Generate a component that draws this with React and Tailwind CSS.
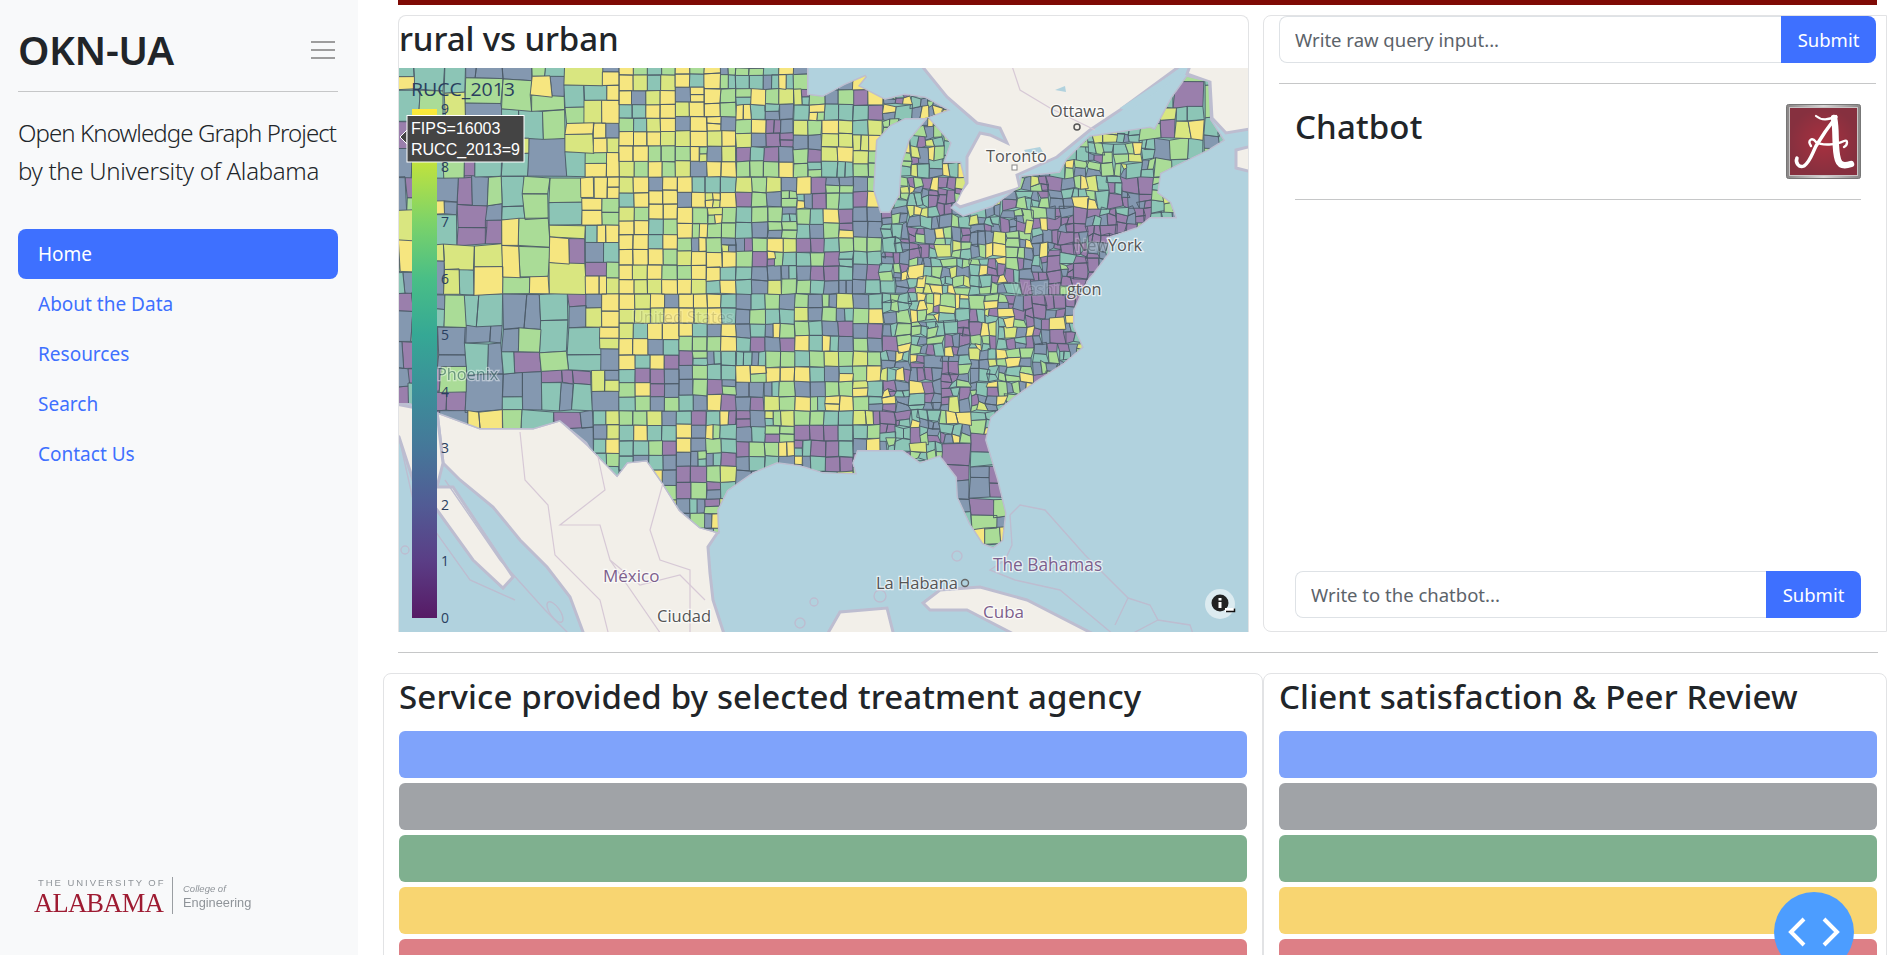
import { useMemo } from 'react'

// page coordinates are used inside the map svg (viewBox starts at the map's top left)
const usOutline = [
  [390, 60], [807, 60], [807, 95], [823, 97], [845, 85], [866, 76], [858, 86], [885, 100], [905, 95], [925, 98], [947, 110],
  [925, 118], [905, 118], [890, 125], [876, 140], [873, 190], [880, 213], [890, 213], [900, 195], [902, 165], [910, 140],
  [928, 118], [950, 143], [943, 163], [960, 163], [965, 183], [957, 200], [950, 208], [963, 217], [993, 207], [1020, 187],
  [1022, 177], [1060, 173], [1067, 160], [1090, 137], [1150, 128], [1155, 130], [1172, 98], [1187, 77], [1208, 82],
  [1210, 120], [1223, 140], [1207, 150], [1180, 163], [1160, 173], [1157, 193], [1170, 203], [1175, 217], [1150, 217],
  [1137, 227], [1107, 237], [1108, 253], [1093, 273], [1087, 280], [1073, 310], [1073, 327], [1082, 347], [1063, 363],
  [1037, 380], [1013, 397], [990, 417], [985, 440], [997, 480], [1005, 513], [1002, 540], [993, 547], [983, 543],
  [970, 523], [958, 497], [957, 477], [940, 455], [920, 462], [903, 450], [857, 450], [852, 463], [855, 473], [823, 472],
  [800, 465], [777, 462], [753, 472], [727, 490], [717, 510], [718, 532], [700, 527], [680, 510], [663, 483], [647, 460],
  [627, 462], [617, 475], [590, 447], [587, 442], [560, 420], [533, 428], [480, 428], [437, 412], [410, 403], [390, 403],
]

const canada = [
  [917, 60], [947, 97], [977, 123], [1000, 128], [1007, 143], [990, 135], [980, 133], [967, 157], [967, 183], [953, 202],
  [960, 207], [1020, 188], [1017, 175], [1057, 157], [1090, 130], [1120, 110], [1188, 60],
]
const canadaEast = [[1192, 60], [1256, 60], [1256, 128], [1226, 133], [1212, 118], [1210, 82], [1187, 74]]
const novaScotia = [[1256, 145], [1236, 150], [1236, 168], [1256, 173]]
const mexico = [
  [437, 412], [480, 428], [533, 428], [560, 420], [590, 447], [617, 475], [627, 462], [647, 460], [663, 483], [680, 510],
  [700, 527], [718, 532], [708, 547], [710, 573], [713, 600], [726, 640], [586, 640], [570, 597], [547, 567], [520, 540],
  [493, 507], [460, 480], [443, 463],
]
const baja = [
  [390, 403], [437, 412], [443, 463], [437, 487], [453, 487], [477, 523], [493, 547], [513, 577], [503, 588], [473, 560],
  [437, 510], [413, 480], [399, 437], [390, 430],
]
const cuba = [[923, 603], [940, 590], [980, 587], [1027, 600], [1105, 640], [1025, 640], [967, 610], [930, 610]]
const yucatan = [[824, 640], [840, 612], [887, 608], [895, 640]]

const metros = [
  [780, 133, 20], [470, 233, 26], [590, 263, 18], [763, 270, 18], [830, 277, 18], [867, 205, 24], [432, 385, 50],
  [932, 379, 26], [734, 397, 22], [818, 448, 24], [674, 463, 18], [1085, 255, 48], [1040, 300, 32], [945, 195, 20],
  [975, 490, 30], [963, 337, 18], [1130, 205, 26], [915, 240, 16], [842, 330, 14], [1050, 190, 12], [1010, 225, 12],
  [780, 350, 12], [590, 380, 14], [1000, 270, 12], [880, 350, 10], [1060, 340, 16], [890, 420, 14],
]

const fills = ['#9a7fac', '#8498b0', '#8cc5b6', '#aadc97', '#d9e680', '#f6e680']

function rand(seed) {
  let s = seed
  return () => {
    s = (s + 0x6d2b79f5) | 0
    let t = Math.imul(s ^ (s >>> 15), 1 | s)
    t = (t + Math.imul(t ^ (t >>> 7), 61 | t)) ^ t
    return ((t ^ (t >>> 14)) >>> 0) / 4294967296
  }
}

function targetSize(x, y) {
  if (x > 1150 && y < 170) return 30
  if (x > 950 && y > 440) return 26
  if (x < 590) return 34
  if (x < 690) return 22
  if (x < 880) return 17
  return 14
}

function weights(x, y) {
  if (x < 590 && y > 300) return [2, 6, 5, 2, 0, 1]
  if (x < 590) return [1, 3, 4, 6, 3, 4]
  if (x < 730 && y < 350) return [0, 1, 3, 3, 3, 9]
  if (x < 880 && y < 240) return [1, 3, 5, 5, 2, 3]
  if (y < 240 && x > 1100) return [1, 3, 5, 4, 1, 1]
  if (x > 910 && x < 1000 && y > 270 && y < 330) return [1, 2, 4, 3, 2, 5]
  if (x > 760 && x < 870 && y > 330 && y < 430) return [1, 3, 4, 3, 2, 4]
  if (y < 220 && x > 900 && x < 960) return [1, 3, 4, 3, 2, 3]
  return [2, 5, 6, 4, 1, 2]
}

function buildCounties() {
  const r = rand(41)
  const paths = fills.map(() => [])
  const jit = (x, y, amp) => {
    const h = Math.sin(Math.round(x) * 12.9898 + Math.round(y) * 78.233) * 43758.5453
    return (h - Math.floor(h) - 0.5) * amp
  }
  const emit = (x, y, w, h) => {
    const cx = x + w / 2
    const cy = y + h / 2
    let idx = -1
    for (const [mx, my, mr] of metros) {
      const d = Math.hypot(cx - mx, cy - my) / mr
      if (d < 1 && r() < 0.95 - d * 0.35) {
        idx = r() < 0.75 ? 0 : 1
        break
      }
    }
    if (idx < 0) {
      const wt = weights(cx, cy)
      let pick = r() * wt.reduce((a, b) => a + b, 0)
      idx = wt.findIndex((v) => (pick -= v) < 0)
    }
    const amp = cx > 880 ? 4 : cx < 590 ? 3 : cx > 700 ? 1.4 : 0.4
    const pt = (px, py) => `${(px + jit(px, py, amp)).toFixed(1)} ${(py + jit(py + 5, px, amp)).toFixed(1)}`
    paths[idx].push(`M${pt(x, y)}L${pt(x + w, y)}L${pt(x + w, y + h)}L${pt(x, y + h)}Z`)
  }
  const split = (x, y, w, h) => {
    const t = targetSize(x + w / 2, y + h / 2) * (0.8 + r() * 0.45)
    if (w <= t && h <= t) return emit(x, y, w, h)
    const mid = x < 590 ? 0.4 : x > 880 ? 0.2 : 0.06
    const f = 0.5 + (r() - 0.5) * mid
    if (w >= h) {
      split(x, y, w * f, h)
      split(x + w * f, y, w * (1 - f), h)
    } else {
      split(x, y, w, h * f)
      split(x, y + h * f, w, h * (1 - f))
    }
  }
  for (let x = 385; x < 1240; x += 117) {
    for (let y = 60; y < 560; y += 117) split(x, y, 117, 117)
  }
  return paths.map((p) => p.join(''))
}

const pts = (list) => list.map((p) => p.join(',')).join(' ')
const ticks = [0, 1, 2, 3, 4, 5, 6, 7, 9]

function Label({ x, y, children, fill = '#555', opacity = 1, size = 16.3 }) {
  return (
    <text x={x} y={y} fill={fill} opacity={opacity} stroke="#ffffff" strokeOpacity="0.7" strokeWidth="2.5" paintOrder="stroke" fontSize={size} fontWeight="500" fontFamily="'Open Sans', sans-serif">
      {children}
    </text>
  )
}

function UsMap() {
  const counties = useMemo(buildCounties, [])
  return (
    <svg viewBox="399 68 849 564" className="block w-[849px] h-[564px]">
      <defs>
        <clipPath id="us"><polygon points={pts(usOutline)} /></clipPath>
        <linearGradient id="viridis" x1="0" y1="1" x2="0" y2="0">
          {['#440154', '#482878', '#3e4989', '#31688e', '#26828e', '#1f9e89', '#35b779', '#6ece58', '#b5de2b', '#fde725'].map((c, i) => (
            <stop key={c} offset={`${(i / 9) * 100}%`} stopColor={c} />
          ))}
        </linearGradient>
        <filter id="soft"><feGaussianBlur stdDeviation="0.5" /></filter>
      </defs>
      <rect x="399" y="68" width="849" height="564" fill="#b1d2de" />
      <g filter="url(#soft)" stroke="#bdbdd0" strokeWidth="3" fill="#f2efe9">
        {[canada, canadaEast, novaScotia, mexico, baja, cuba, yucatan].map((shape, i) => (
          <polygon key={i} points={pts(shape)} />
        ))}
        <polygon points={pts(usOutline)} />
        <g fill="none" stroke="#d7c9d6" strokeWidth="1.2">
          <polyline points="520,432 525,480 548,505 555,555 600,600 610,640" />
          <polyline points="597,452 605,490 560,525 600,525 610,560 665,640" />
          <polyline points="663,483 650,530 660,560 690,570 690,640" />
          <polyline points="610,560 640,585 680,575 705,600" />
          <polyline points="1010,60 1020,90 1050,108 1095,130" />
        </g>
        <g fill="none" stroke="#bdbdd0" strokeWidth="1.4">
          <polyline points="1010,515 1020,505 1045,510 1085,555 1128,598 1115,625" />
          <polyline points="1010,515 1012,545 1005,560 990,570 1015,580 1060,590 1120,640" />
          <polyline points="1128,598 1150,605 1158,620 1190,625 1195,640" />
          <polyline points="1158,620 1120,640" />
          <circle cx="957" cy="556" r="5" />
          <circle cx="880" cy="596" r="6" />
          <circle cx="814" cy="602" r="4" />
          <circle cx="800" cy="623" r="5" />
          <ellipse cx="555" cy="612" rx="5" ry="12" transform="rotate(-35 555 612)" />
          <circle cx="405" cy="550" r="4" />
          <polyline points="399,437 413,500 470,580 515,600" />
          <polyline points="445,480 500,560 545,610 575,640" />
        </g>
        <g fill="#b1d2de" stroke="none">
          <polygon points="1120,108 1178,70 1185,72 1128,112" />
          <polygon points="1024,150 1040,147 1043,152 1028,156" />
          <polygon points="1055,90 1065,86 1066,92" />
        </g>
      </g>
      <g clipPath="url(#us)">
        <polygon points={pts(usOutline)} fill="#8cc5b6" />
        {counties.map((d, i) => (
          <path key={fills[i]} d={d} fill={fills[i]} stroke="#4c5a68" strokeWidth="0.9" />
        ))}
      </g>

      <Label x={1050} y={117}>Ottawa</Label>
      <circle cx="1077" cy="127" r="3" fill="none" stroke="#555" strokeWidth="1.5" />
      <Label x={986} y={162}>Toronto</Label>
      <rect x="1012" y="165" width="5" height="5" fill="#fff" stroke="#888" />
      <Label x={1075} y={251} opacity={0.3}>New</Label>
      <Label x={1108} y={251}>York</Label>
      <Label x={1012} y={295} opacity={0.2}>Washin</Label>
      <Label x={1067} y={295}>gton</Label>
      <Label x={437} y={380} fill="#3f6a6a" opacity={0.6}>Phoenix</Label>
      <Label x={632} y={323} opacity={0.2}>United States</Label>
      <Label x={603} y={582} fill="#7d5f8c" size={17}>México</Label>
      <Label x={657} y={622} size={16.5}>Ciudad</Label>
      <Label x={876} y={589} size={16.5}>La Habana</Label>
      <circle cx="965" cy="583" r="3.5" fill="none" stroke="#666" strokeWidth="1.4" />
      <Label x={983} y={618} fill="#7d5f8c" size={17}>Cuba</Label>
      <Label x={993} y={571} fill="#7d5f8c" size={17.3}>The Bahamas</Label>

      <rect x="412" y="109" width="25" height="509" fill="#ffffff" />
      <rect x="412" y="109" width="25" height="509" fill="url(#viridis)" opacity="0.9" />
      <text x="411" y="96" fill="#2a3f5f" fontSize="18" textLength="104" lengthAdjust="spacingAndGlyphs" fontFamily="'Open Sans', sans-serif">RUCC_2013</text>
      {ticks.map((t) => (
        <text key={t} x="441" y={623 - t * 56.55} fill="#2a3f5f" fontSize="14" fontFamily="'Open Sans', sans-serif">{t}</text>
      ))}
      <polygon points="400,137 407,130 407,144" fill="#444444" stroke="#ffffff" />
      <rect x="407" y="115.5" width="117" height="46.5" fill="#444444" stroke="#ffffff" />
      <text x="411" y="134" fill="#ffffff" fontSize="16" fontFamily="'Liberation Sans', sans-serif">FIPS=16003</text>
      <text x="411" y="155" fill="#ffffff" fontSize="16" fontFamily="'Liberation Sans', sans-serif">RUCC_2013=9</text>
      <text x="441" y="172" fill="#2a3f5f" fontSize="14" fontFamily="'Open Sans', sans-serif">8</text>

      <circle cx="1220" cy="604" r="15" fill="#ffffff" fillOpacity="0.55" />
      <circle cx="1220" cy="603" r="8.5" fill="#222222" />
      <rect x="1218.5" y="602" width="3" height="6" fill="#ffffff" />
      <rect x="1218.5" y="598" width="3" height="2.5" fill="#ffffff" />
      <rect x="1225" y="608" width="10" height="4" fill="#ffffff" />
      <path d="M1226 611.5h8.5v-3" fill="none" stroke="#111111" strokeWidth="1.5" />
    </svg>
  )
}

function CollegeLogo() {
  return (
    <div className="flex items-stretch ml-[16px] mb-[41px] blur-[0.3px]">
      <div className="w-[130px] text-[#9e1b32]">
        <div className="whitespace-nowrap text-[9.5px] leading-[11px] mb-[4px] tracking-[1.95px] text-[#8f9499] pl-[4px] [font-family:'Liberation_Sans',sans-serif]">THE UNIVERSITY OF</div>
        <div className="whitespace-nowrap text-[26.5px] leading-[22px] tracking-[-0.7px] [font-family:'Liberation_Serif',serif]">ALABAMA</div>
      </div>
      <div className="w-px bg-[#9a9ea2] ml-[8px] mr-[10px]" />
      <div className="text-[#8f9499] pt-[6px]">
        <div className="text-[9.5px] leading-[12px] italic [font-family:'Liberation_Sans',sans-serif]">College of</div>
        <div className="text-[12.8px] leading-[15px] [font-family:'Liberation_Sans',sans-serif]">Engineering</div>
      </div>
    </div>
  )
}

function Sidebar() {
  const links = ['About the Data', 'Resources', 'Search', 'Contact Us']
  return (
    <aside className="w-[358px] shrink-0 h-full bg-[#f8f9fa] pl-[18px] pr-[20px] flex flex-col justify-between">
      <div>
        <div className="flex items-center justify-between h-[92px] border-b border-[#c6c7c8] pt-[8px]">
          <h1 className="text-[40px] font-semibold leading-none text-[#212529] tracking-[-0.4px]">OKN-UA</h1>
          <svg width="24" height="18" viewBox="0 0 24 18" className="mr-[3px]">
            <path d="M0 1h24M0 9h24M0 17h24" stroke="#7f7f7f" strokeWidth="1.6" />
          </svg>
        </div>
        <p className="mt-[22px] whitespace-nowrap text-[24px] leading-[38px] font-light text-[#212529] tracking-[-0.3px]">
          <span className="tracking-[-0.9px]">Open Knowledge Graph Project</span><br />by the University of Alabama
        </p>
        <nav className="mt-[39px] flex flex-col text-[19px]">
          <a className="h-[50px] flex items-center px-[20px] rounded-lg bg-[#3e70ff] text-white">Home</a>
          {links.map((l) => (
            <a key={l} className="h-[50px] flex items-center px-[20px] text-[#3e70ff]">{l}</a>
          ))}
        </nav>
      </div>
      <CollegeLogo />
    </aside>
  )
}

function QueryBox({ placeholder, className }) {
  return (
    <div className={`flex h-[47px] ${className}`}>
      <input
        placeholder={placeholder}
        className="flex-1 min-w-0 px-[15px] text-[18.5px] border border-[#dee2e6] border-r-0 rounded-l-lg outline-none placeholder:text-[#5c636a]"
      />
      <button className="w-[95px] bg-[#3e70ff] text-white text-[18.5px] rounded-r-lg">Submit</button>
    </div>
  )
}

function AlabamaLogo() {
  return (
    <svg width="75" height="75" viewBox="0 0 75 75">
      <defs>
        <radialGradient id="crimson">
          <stop offset="0%" stopColor="#a9303f" />
          <stop offset="100%" stopColor="#86303f" />
        </radialGradient>
        <linearGradient id="frame">
          <stop offset="0%" stopColor="#8a8686" />
          <stop offset="50%" stopColor="#d9d6d6" />
          <stop offset="100%" stopColor="#8a8686" />
        </linearGradient>
      </defs>
      <rect x="0.5" y="0.5" width="74" height="74" rx="2" fill="url(#frame)" stroke="#777" />
      <rect x="3.5" y="3.5" width="68" height="68" fill="url(#crimson)" stroke="#c9c5c5" strokeWidth="1" />
      <g fill="none" stroke="#ffffff" strokeLinecap="round">
        <path d="M50 13C43 22 36 32 30 42C26 50 24 58 18 62C13 64 9 59 11 54" strokeWidth="3.5" />
        <path d="M48 14C51 28 48 44 52 56C54 62 59 62 65 60" strokeWidth="6.5" />
        <path d="M30 12C36 17 43 16 50 12" strokeWidth="2.2" />
        <path d="M25 42C21 36 26 33 30 38C36 42 50 41 58 37C62 35 62 41 58 43" strokeWidth="2.4" />
      </g>
    </svg>
  )
}

function BarCard({ title, className, barsClass }) {
  const bars = ['bg-[#7fa3fb]', 'bg-[#a0a3a7]', 'bg-[#7fb08f]', 'bg-[#f8d571]', 'bg-[#dd7f86]']
  return (
    <section className={`h-[330px] border border-[#e2e3e5] rounded-l-lg rounded-tr-lg ${className}`}>
      <h2 className="text-[33px] font-medium leading-[46px] text-[#212529] tracking-[0.15px] whitespace-nowrap">{title}</h2>
      <div className={`mt-[11px] flex flex-col gap-[5px] ${barsClass}`}>
        {bars.map((b) => (
          <div key={b} className={`h-[47px] shrink-0 rounded-md ${b}`} />
        ))}
      </div>
    </section>
  )
}

export default function App() {
  return (
    <div className="relative flex h-screen w-[1887px] overflow-hidden bg-white text-[#212529] [font-family:'Noto_Sans',sans-serif]">
      <Sidebar />
      <main className="flex-1 min-w-0">
        <div className="h-[5px] ml-[40px] mr-[10px] bg-[#7f0a05]" />
        <div className="flex mt-[10px] ml-[40px] h-[617px]">
          <section className="w-[851px] shrink-0 border border-b-0 border-[#e2e3e5] rounded-t-lg overflow-hidden">
            <h2 className="h-[52px] text-[33px] font-medium leading-[46px] text-[#212529] tracking-[-0.1px]">rural vs urban</h2>
            <UsMap />
          </section>
          <section className="ml-[14px] flex-1 border border-[#e2e3e5] rounded-l-lg flex flex-col">
            <QueryBox placeholder="Write raw query input..." className="ml-[15px] mr-[10px]" />
            <hr className="mt-[20px] ml-[15px] mr-[10px] border-[#c6c7c8]" />
            <div className="mx-[31px] mr-[25px] flex flex-col flex-1">
              <div className="flex justify-between h-[116px] border-b border-[#c6c7c8] pt-[20px]">
                <h2 className="text-[33px] font-medium leading-[46px] text-[#212529] tracking-[0.15px]">Chatbot</h2>
                <AlabamaLogo />
              </div>
              <div className="flex-1" />
              <QueryBox placeholder="Write to the chatbot..." className="mb-[13px]" />
            </div>
          </section>
        </div>
        <hr className="mt-[20px] ml-[40px] mr-[9px] border-[#c6c7c8]" />
        <div className="flex mt-[20px]">
          <BarCard title="Service provided by selected treatment agency" className="w-[880px] shrink-0 ml-[25px] pl-[15px]" barsClass="w-[848px]" />
          <BarCard title="Client satisfaction & Peer Review" className="flex-1 pl-[15px]" barsClass="w-[598px]" />
        </div>
      </main>
      <button className="absolute left-[1774px] top-[892px] w-[80px] h-[80px] rounded-full bg-[#4c9dff] flex items-center justify-center">
        <svg width="52" height="30" viewBox="0 0 52 30" fill="none" stroke="#ffffff" strokeWidth="4">
          <path d="M16 2 3 15l13 13M36 2l13 13-13 13" />
        </svg>
      </button>
    </div>
  )
}
